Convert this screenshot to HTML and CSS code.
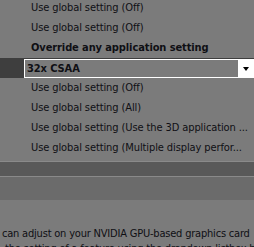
FILE: index.html
```html
<!DOCTYPE html>
<html lang="en">
<head>
  <meta charset="UTF-8" />
  <title>3D Settings</title>
  <link rel="stylesheet" href="styles.css">
</head>
<body>
  <div class="settings">
    <div class="row">Use global setting (Off)</div>
    <div class="row">Use global setting (Off)</div>
    <div class="row bold">Override any application setting</div>
    <div class="row selected">
      <div class="combo">
        <span class="combo-value">32x CSAA</span>
        <span class="combo-arrow"></span>
      </div>
    </div>
    <div class="row">Use global setting (Off)</div>
    <div class="row">Use global setting (All)</div>
    <div class="row">Use global setting (Use the 3D application ...</div>
    <div class="row">Use global setting (Multiple display perfor...</div>
  </div>

  <div class="scroll-band"></div>
  <div class="gap-band"></div>

  <div class="description">
    <p>can adjust on your NVIDIA GPU-based graphics card</p>
    <p class="indent">the setting of a feature using the dropdown listbox b</p>
  </div>
</body>
</html>
```

FILE: styles.css
```css
body {
  margin: 0;
  width: 254px;
  height: 247px;
  overflow: hidden;
  background: #7b7b7b;
  font-family: 'DejaVu Sans Condensed', 'DejaVu Sans', sans-serif;
  font-size: 11px;
  color: #0f0f14;
}

.settings {
  display: flex;
  flex-direction: column;
  margin-top: -2px;
  height: 163px;
}

.row {
  height: 20px;
  line-height: 20px;
  padding-left: 31px;
  white-space: nowrap;
  overflow: hidden;
  letter-spacing: -0.1px;
}

.bold {
  font-weight: bold;
}

.row.selected {
  height: 20px;
  padding-left: 24px;
  background: #3e3e3e;
  display: flex;
  align-items: flex-start;
}

.combo {
  flex: 1;
  height: 17px;
  margin-top: 1px;
  border: 1px solid #ffffff;
  border-right: none;
  display: flex;
  background: #7b7b7b;
}

.combo-value {
  flex: 1;
  font-weight: bold;
  line-height: 17px;
  padding-left: 2px;
}

.combo-arrow {
  width: 16px;
  background: #ffffff;
  position: relative;
}

.combo-arrow::after {
  content: '';
  position: absolute;
  left: 5px;
  top: 7px;
  border-left: 3.5px solid transparent;
  border-right: 3.5px solid transparent;
  border-top: 4px solid #000;
}

.scroll-band {
  height: 14px;
  background: #595959;
  border-top: 1px solid #8a8a8a;
  border-bottom: 1px solid #8a8a8a;
}

.gap-band {
  height: 23px;
  background: #6b6b6b;
}

.description {
  padding-top: 26px;
  padding-left: 2px;
  font-size: 11px;
  letter-spacing: -0.2px;
  line-height: 15px;
  white-space: nowrap;
  overflow: hidden;
}

.description p {
  margin: 0;
}

.description .indent {
  padding-left: 3px;
}
```
